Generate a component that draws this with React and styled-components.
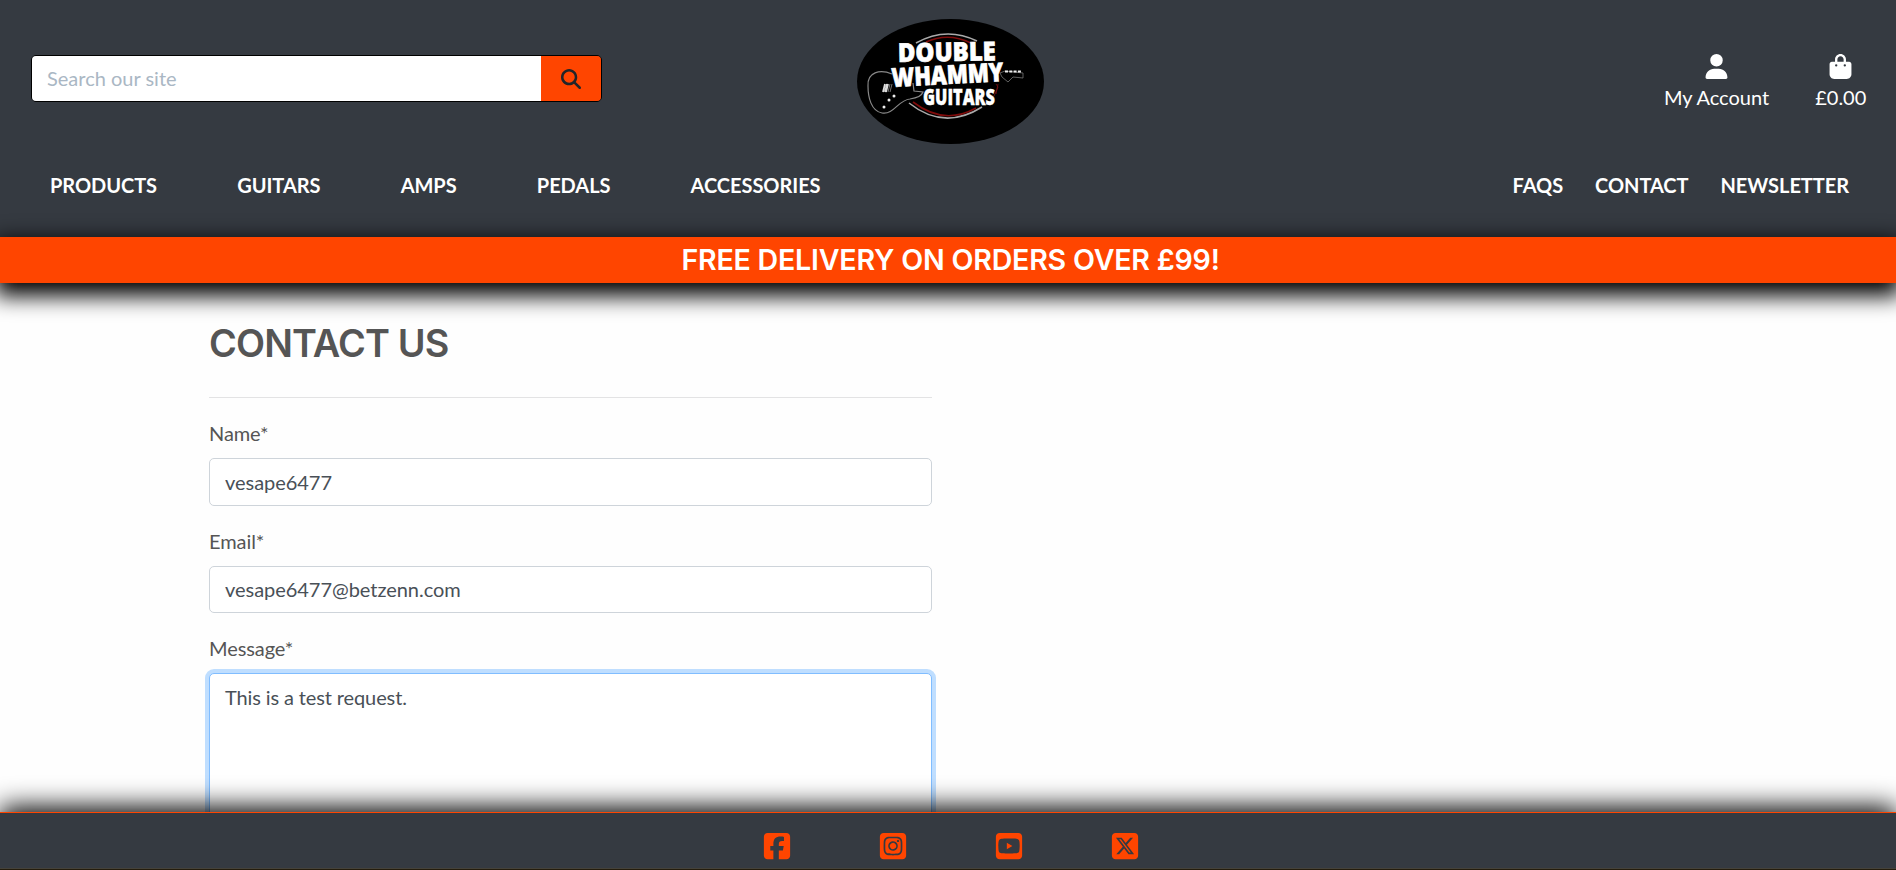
import React from 'react';
import styled, { createGlobalStyle } from 'styled-components';
import {
  FaUser, FaBagShopping, FaMagnifyingGlass, FaSquareFacebook,
  FaSquareInstagram, FaSquareYoutube, FaSquareXTwitter,
} from 'react-icons/fa6';

const GlobalStyle = createGlobalStyle`
  *, *::before, *::after { box-sizing: border-box; }
  body {
    margin: 0;
    overflow: hidden;
    background: #fefefe;
    color: #555;
    font: 400 20px/30px Lato, sans-serif;
  }
`;

const Page = styled.div`
  display: flex;
  flex-direction: column;
  height: 870px;
  overflow: hidden;
`;

const Header = styled.header`
  flex: none;
  height: 237px;
  background: #353a41;
  color: #fff;
`;

const TopBar = styled.div`
  display: grid;
  grid-template-columns: 1fr 187px 1fr;
  align-items: start;
  height: 170px;
  padding: 0 26px 0 31px;
`;

const SearchForm = styled.form`
  display: flex;
  width: 571px;
  height: 47px;
  margin-top: 55px;
  border: 1px solid #000;
  border-radius: 5px;
  overflow: hidden;
`;

const SearchInput = styled.input`
  flex: 1;
  min-width: 0;
  border: 0;
  padding: 0 15px 2px;
  background: #fff;
  font: inherit;
  outline: none;
  &::placeholder { color: #aab7c4; opacity: 1; }
`;

const SearchButton = styled.button`
  display: flex;
  align-items: center;
  justify-content: center;
  width: 60px;
  border: 0;
  padding: 0;
  background: #ff4500;
  color: #212529;
  font-size: 20px;
`;

const Logo = styled.svg`
  display: block;
  width: 187px;
  height: 125px;
  margin-top: 19px;
`;

const AccountLinks = styled.div`
  display: flex;
  justify-content: flex-end;
  gap: 46px;
  padding: 54px 3.7px 0 0;
`;

const AccountLink = styled.a`
  display: flex;
  flex-direction: column;
  align-items: center;
  color: #fff;
  line-height: 30px;
  svg { width: 25px; height: 25px; margin-bottom: 3px; }
`;

const NavBar = styled.nav`
  display: flex;
  justify-content: space-between;
  padding: 0 47px 0 50px;
`;

const NavGroup = styled.div`
  display: flex;
  gap: ${(p) => p.$gap}px;
`;

const NavLink = styled.a`
  color: #fff;
  font-weight: 700;
  line-height: 30px;
  letter-spacing: -0.05px;
`;

const Banner = styled.div`
  flex: none;
  position: relative;
  height: 46px;
  background: #ff4500;
  box-shadow: 0 8px 22px 5px #000;
  color: #fff;
  font: 600 28.6px/46px Inter, sans-serif;
  letter-spacing: -0.22px;
  text-align: center;
  padding-left: 5px;
`;

const Main = styled.main`
  flex: 1;
  min-height: 0;
  overflow: hidden;
  padding-left: 209px;
`;

const ContactForm = styled.form`
  width: 723px;
  padding-top: 36px;
`;

const Title = styled.h2`
  margin: 0;
  height: 78px;
  color: #555;
  font: 600 37.8px/48px Inter, sans-serif;
  letter-spacing: -0.85px;
`;

const Divider = styled.hr`
  height: 1px;
  margin: 0 0 20px;
  border: 0;
  background: #e3e3e4;
`;

const Field = styled.div`
  display: flex;
  flex-direction: column;
  margin-bottom: 20px;
`;

const Label = styled.label`
  margin-bottom: 10px;
  line-height: 30px;
  letter-spacing: -0.08px;
`;

const TextInput = styled.input`
  height: ${(p) => p.$height || 47}px;
  padding: 0 15px ${(p) => (p.$height ? 0 : 2)}px;
  border: 1px solid #ced4da;
  border-radius: 5px;
  background: #fff;
  color: #495057;
  font: inherit;
  letter-spacing: -0.04px;
`;

const MessageInput = styled.textarea`
  height: 310px;
  padding: 8px 15px;
  border: 1px solid #80bdff;
  border-radius: 5px;
  box-shadow: 0 0 0 4px #bfdeff;
  background: #fff;
  color: #495057;
  font: inherit;
  letter-spacing: -0.12px;
  outline: none;
  resize: none;
`;

const Footer = styled.footer`
  flex: none;
  position: relative;
  display: flex;
  justify-content: center;
  gap: 86.2px;
  height: 58px;
  padding: 18px 0 0 6px;
  border-top: 1px solid #ff4500;
  border-bottom: 1px solid #241c0c;
  background: #353a41;
  box-shadow: 0 -5px 27px 0 #000, inset 0 -1px 0 #45423a;
  color: #ff4500;
  font-size: 30px;
`;

const leftLinks = ['PRODUCTS', 'GUITARS', 'AMPS', 'PEDALS', 'ACCESSORIES'];
const rightLinks = ['FAQS', 'CONTACT', 'NEWSLETTER'];

function BrandLogo() {
  return (
    <Logo viewBox="0 0 187 125">
      <ellipse cx="93.5" cy="62.5" rx="93.5" ry="62.5" />
      <g fill="none">
        <path d="M59 24Q89 7 120 22M52 84Q87 112 125 88" stroke="#aaa" strokeWidth="1.6" />
        <path d="M69 23Q91 13 114 24M56 83Q87 107 119 89" stroke="#800b0b" strokeWidth="1.6" />
        <path d="M137 77l4-9-2-3m0 10l2-10" stroke="#7a1010" strokeWidth=".8" />
        <path
          d="M35 55C23 50 10 53 11 67C11 78 14 92 25 94C37 96 41 81 53 80C60 79 65 76 66 73L57 72L56 64"
          stroke="#888" strokeWidth="1.2"
        />
        <path d="M143 54l5-2 18 2 0 5-10-1-5 5-6-5z" stroke="#777" strokeWidth=".8" />
        <path d="M148 52.5h16" stroke="#eee" strokeWidth="2" strokeDasharray="3 1.3" />
        <path d="M28 65l-2 8m4-8l-2 8m3-8l-2 8" stroke="#ddd" strokeWidth="1.8" />
        <path d="M33 65l-2 8m4-8l-2 8" stroke="#777" />
      </g>
      <g fill="#eee">
        <circle cx="27" cy="88" r="1.5" />
        <circle cx="32" cy="81" r="1.5" />
        <circle cx="37" cy="77" r="1.5" />
      </g>
      <g fill="#fff" fontFamily="'Open Sans', sans-serif" fontWeight="800" stroke="#fff">
        <text x="41" y="43" transform="rotate(-1 41 43)" fontSize="26" strokeWidth=".7" textLength="98" lengthAdjust="spacingAndGlyphs">DOUBLE</text>
        <text x="35" y="68" transform="rotate(-3 35 68)" fontSize="26" strokeWidth=".7" textLength="112" lengthAdjust="spacingAndGlyphs">WHAMMY</text>
        <text x="66" y="86" fontSize="22.5" strokeWidth=".4" textLength="72" lengthAdjust="spacingAndGlyphs">GUITARS</text>
      </g>
    </Logo>
  );
}

export default function App() {
  return (
    <Page>
      <GlobalStyle />
      <Header>
        <TopBar>
          <SearchForm>
            <SearchInput placeholder="Search our site" />
            <SearchButton type="button" aria-label="Search"><FaMagnifyingGlass /></SearchButton>
          </SearchForm>
          <BrandLogo />
          <AccountLinks>
            <AccountLink><FaUser />My Account</AccountLink>
            <AccountLink><FaBagShopping />£0.00</AccountLink>
          </AccountLinks>
        </TopBar>
        <NavBar>
          <NavGroup $gap={80.2}>
            {leftLinks.map((t) => <NavLink key={t}>{t}</NavLink>)}
          </NavGroup>
          <NavGroup $gap={32}>
            {rightLinks.map((t) => <NavLink key={t}>{t}</NavLink>)}
          </NavGroup>
        </NavBar>
      </Header>
      <Banner>FREE DELIVERY ON ORDERS OVER £99!</Banner>
      <Main>
        <ContactForm>
          <Title>CONTACT US</Title>
          <Divider />
          <Field>
            <Label htmlFor="name">Name*</Label>
            <TextInput id="name" $height={48} defaultValue="vesape6477" />
          </Field>
          <Field>
            <Label htmlFor="email">Email*</Label>
            <TextInput id="email" defaultValue="vesape6477@betzenn.com" />
          </Field>
          <Field>
            <Label htmlFor="message">Message*</Label>
            <MessageInput id="message" defaultValue="This is a test request." />
          </Field>
        </ContactForm>
      </Main>
      <Footer>
        <FaSquareFacebook />
        <FaSquareInstagram />
        <FaSquareYoutube />
        <FaSquareXTwitter />
      </Footer>
    </Page>
  );
}
